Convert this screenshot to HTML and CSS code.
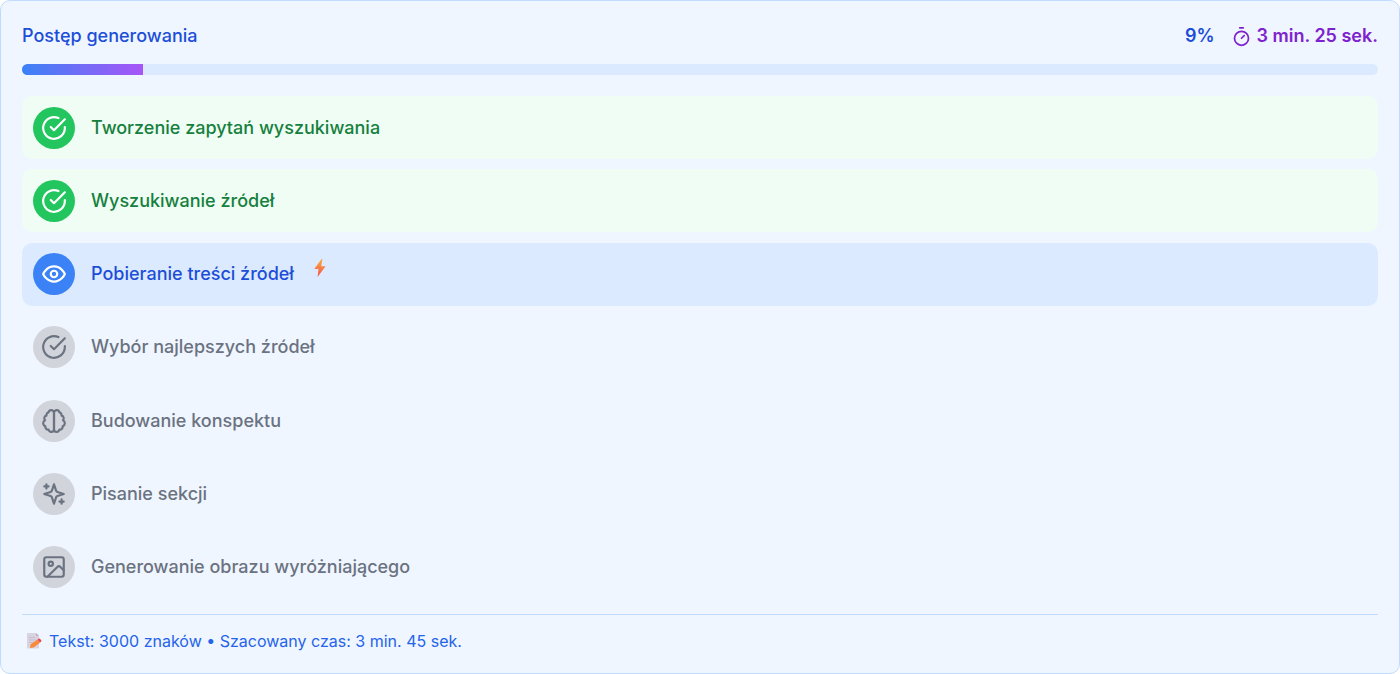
FILE: index.html
```html
<!DOCTYPE html>
<html lang="pl">
	<head>
		<meta charset="utf-8">
		<meta name="viewport" content="width=device-width, initial-scale=1">
		<title>Postęp generowania</title>
		<link rel="stylesheet" href="styles.css">
	</head>
	<body>
		<!-- shared icon shapes -->
		<svg class="defs" aria-hidden="true">
			<symbol id="check" viewBox="0 0 24 24">
				<path d="M22 11.08V12a10 10 0 1 1-5.93-9.14"/>
				<path d="m9 11 3 3L22 4"/>
			</symbol>
		</svg>
		<main class="card">
			<header class="head">
				<span id="title">Postęp generowania</span>
				<div class="status">
					<span class="percent">9%</span>
					<span class="time">
						<svg class="timer" viewBox="0 0 24 24"><path d="M10 2h4M12 14l3-3"/><circle cx="12" cy="14" r="8"/></svg>
						3 min. 25 sek.
					</span>
				</div>
			</header>
			<div class="bar" role="progressbar" aria-labelledby="title" aria-valuenow="9" aria-valuemin="0" aria-valuemax="100">
				<div class="fill" style="width:8.9%"></div>
			</div>
			<ol class="steps">
				<li class="step done">
					<span class="dot"><svg><use href="#check"/></svg></span>
					<span>Tworzenie zapytań wyszukiwania</span>
				</li>
				<li class="step done">
					<span class="dot"><svg><use href="#check"/></svg></span>
					<span>Wyszukiwanie źródeł</span>
				</li>
				<li class="step active" aria-current="step">
					<span class="dot"><svg viewBox="0 0 24 24"><path d="M2 12s3-7 10-7 10 7 10 7-3 7-10 7-10-7-10-7Z"/><circle cx="12" cy="12" r="3"/></svg></span>
					<span>Pobieranie treści źródeł</span>
					<svg class="bolt" viewBox="0 0 12 18">
						<defs>
							<linearGradient id="boltFill" x1="0" y1="0" x2="0" y2="1">
								<stop offset="0" stop-color="#fbab3c"/>
								<stop offset="1" stop-color="#f4514f"/>
							</linearGradient>
						</defs>
						<path fill="url(#boltFill)" d="M7.6 0 .6 9.5q-.3.6.4.6h3.5L3.6 18l7.6-10.2q.3-.6-.4-.6H7.2L8.4.3Z"/>
					</svg>
				</li>
				<li class="step">
					<span class="dot"><svg><use href="#check"/></svg></span>
					<span>Wybór najlepszych źródeł</span>
				</li>
				<li class="step">
					<span class="dot"><svg viewBox="0 0 24 24"><path d="M9.5 2A2.5 2.5 0 0 1 12 4.5v15a2.5 2.5 0 0 1-4.96.44 2.5 2.5 0 0 1-2.96-3.08 3 3 0 0 1-.34-5.58 2.5 2.5 0 0 1 1.32-4.24 2.5 2.5 0 0 1 1.98-3A2.5 2.5 0 0 1 9.5 2Z"/><path d="M14.5 2A2.5 2.5 0 0 0 12 4.5v15a2.5 2.5 0 0 0 4.96.44 2.5 2.5 0 0 0 2.96-3.08 3 3 0 0 0 .34-5.58 2.5 2.5 0 0 0-1.32-4.24 2.5 2.5 0 0 0-1.98-3A2.5 2.5 0 0 0 14.5 2Z"/></svg></span>
					<span>Budowanie konspektu</span>
				</li>
				<li class="step">
					<span class="dot"><svg viewBox="0 0 24 24"><path d="m12 3-1.912 5.813a2 2 0 0 1-1.275 1.275L3 12l5.813 1.912a2 2 0 0 1 1.275 1.275L12 21l1.912-5.813a2 2 0 0 1 1.275-1.275L21 12l-5.813-1.912a2 2 0 0 1-1.275-1.275L12 3Z"/><path d="M5 3v4M19 17v4M3 5h4M17 19h4"/></svg></span>
					<span>Pisanie sekcji</span>
				</li>
				<li class="step">
					<span class="dot"><svg viewBox="0 0 24 24"><rect x="3" y="3" width="18" height="18" rx="2"/><circle cx="9" cy="9" r="2"/><path d="m21 15-3.086-3.086a2 2 0 0 0-2.828 0L6 21"/></svg></span>
					<span>Generowanie obrazu wyróżniającego</span>
				</li>
			</ol>
			<footer class="foot">
				<svg class="memo" viewBox="0 0 16 16">
					<path fill="#d9d3e0" d="M2 0h8l3 3v11.500q0 1-1 1H2q-1 0-1-1V1q0-1 1-1Z"/>
					<path fill="#b9aec8" d="M10 0l3 3h-3Z"/>
					<path stroke="#c5bdd0" d="M3 4.500h6M3 7h7M3 9.500h5"/>
					<path fill="#f98a3c" d="m4.500 11.500 7-5 2.500 3.200-6.500 4.800-3.500.5Z"/>
					<path fill="#e5484d" d="m11.500 6.500 1.300-.9q.8-.4 1.400.3l1 1.400q.5.800-.2 1.400l-1 .8Z"/>
				</svg>
				<span>Tekst: 3000 znaków • Szacowany czas: 3 min. 45 sek.</span>
			</footer>
		</main>
	</body>
</html>
```
FILE: styles.css
```css
*{
	box-sizing:border-box;
}
body{
	margin:0;
	background:white;
	font-family:Inter, "Liberation Sans", sans-serif;
	font-size:18px;
	font-weight:500;
	line-height:26px;
}
svg{
	display:block;
	flex:none;
	fill:none;
}
.defs{
	position:absolute;
	width:0;
	height:0;
}
.card{
	display:flex;
	flex-direction:column;
	min-height:100vh;
	padding:22px 21px 19px;
	background:#eff6ff;
	border:1px solid #bfdbfe;
	border-radius:10px;
}
.head{
	display:flex;
	justify-content:space-between;
	color:#1d4ed8;
}
.status{
	display:flex;
	gap:16px;
	font-weight:600;
}
.time{
	display:flex;
	align-items:center;
	gap:5px;
	color:#7e22ce;
}
.timer{
	width:21px;
	height:21px;
	stroke:currentColor;
	stroke-width:2;
	stroke-linecap:round;
}
.bar{
	height:11px;
	margin:15px 0 21px;
	overflow:hidden;
	background:#dbeafe;
	border-radius:6px;
}
.fill{
	height:100%;
	background:linear-gradient(to right, #3b82f6, #a855f7);
}
.steps{
	display:flex;
	flex:1;
	flex-direction:column;
	justify-content:space-between;
	gap:10px;
	margin:0;
	padding:0;
	list-style:none;
}
.step{
	display:flex;
	align-items:center;
	gap:16px;
	min-height:63px;
	padding:0 11px;
	border-radius:10px;
	color:#6b7280;
}
.dot{
	display:flex;
	align-items:center;
	justify-content:center;
	width:42px;
	height:42px;
	border-radius:50%;
	background:#d1d5db;
}
.dot svg{
	width:26px;
	height:26px;
	stroke:currentColor;
	stroke-width:2;
	stroke-linecap:round;
	stroke-linejoin:round;
}
.done{
	background:#f0fdf4;
	color:#15803d;
}
.done .dot{
	background:#22c55e;
	color:white;
}
.active{
	background:#dbeafe;
	color:#1d4ed8;
}
.active .dot{
	background:#3b82f6;
	color:white;
}
.bolt{
	width:12px;
	height:18px;
	margin:0 0 12px 4px;
}
.foot{
	display:flex;
	align-items:center;
	gap:7px;
	margin-top:15px;
	padding:13px 4px 0;
	border-top:1px solid #bfdbfe;
	color:#2563eb;
	font-size:16px;
	font-weight:400;
}
.memo{
	width:16px;
	height:16px;
}
```
